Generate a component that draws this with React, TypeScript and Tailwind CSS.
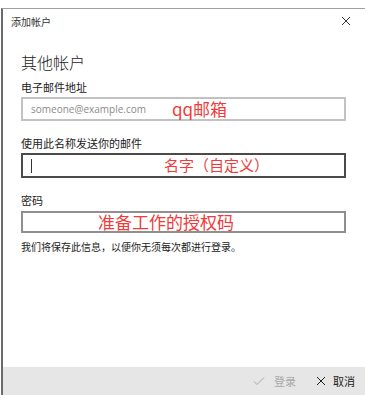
export default function App() {
  const cjk = { fontFamily: '"Noto Sans CJK SC", "Liberation Sans", sans-serif' };
  return (
    <div className="w-[374px] h-[395px] bg-white pt-[8px] pl-[1px]" style={cjk}>
      <div className="w-[364px] h-[387px] border-t border-t-[#a0a0a0] border-l-2 border-l-[#6b6b6b] flex flex-col">
        <div className="h-[24px] flex items-center justify-between pl-[8px] pr-[14px]">
          <span className="text-[10px] text-[#333]">添加帐户</span>
          <svg width="10" height="10" viewBox="0 0 10 10" className="text-[#333]">
            <path d="M1 1 L9 9 M9 1 L1 9" stroke="currentColor" strokeWidth="1" />
          </svg>
        </div>
        <div className="flex-1 pl-[18px] pr-[18px]">
          <h1 className="mt-[19px] text-[16px] leading-[20px] font-light text-[#222]">其他帐户</h1>

          <p className="mt-[8px] text-[11px] leading-[15px] text-[#222]">电子邮件地址</p>
          <div className="mt-[2px] h-[24px] w-[325px] border-2 border-[#c2c2c2] flex items-center pl-[8px]">
            <span
              className="text-[10px] text-[#8a8a8a] w-[141px]"
              style={{ fontFamily: '"Open Sans", "Liberation Sans", sans-serif' }}
            >
              someone@example.com
            </span>
            <span className="text-[17px] leading-[20px] text-[#f23a3a]">qq邮箱</span>
          </div>

          <p className="mt-[15px] text-[11px] leading-[15px] text-[#222]">使用此名称发送你的邮件</p>
          <div className="mt-[2px] h-[25px] w-[325px] border-2 border-[#4a4a4a] flex items-center pl-[8px]">
            <span className="w-px h-[14px] bg-[#333]" />
            <span className="ml-[132px] text-[15px] text-[#f23a3a]">名字（自定义）</span>
          </div>

          <p className="mt-[15px] text-[11px] leading-[15px] text-[#222]">密码</p>
          <div className="mt-[3px] h-[22px] w-[325px] border-2 border-[#8f8f8f] flex items-center pl-[75px]">
            <span className="text-[17px] leading-[20px] text-[#f23a3a]">准备工作的授权码</span>
          </div>

          <p className="mt-[7px] text-[10px] leading-[14px] text-[#222]">
            我们将保存此信息，以便你无须每次都进行登录。
          </p>
        </div>
        <div className="h-[28px] bg-[#e6e6e6] flex items-center justify-end pr-[10px] text-[11px]">
          <div className="flex items-center gap-[9px] text-[#a8a8a8]">
            <svg width="12" height="10" viewBox="0 0 12 10">
              <path d="M1 5.5 L4 8.5 L11 1.5" stroke="currentColor" strokeWidth="1" fill="none" />
            </svg>
            <span>登录</span>
          </div>
          <div className="ml-[20px] flex items-center gap-[7px] text-[#222]">
            <svg width="10" height="10" viewBox="0 0 10 10">
              <path d="M1 1 L9 9 M9 1 L1 9" stroke="currentColor" strokeWidth="1" />
            </svg>
            <span>取消</span>
          </div>
        </div>
      </div>
    </div>
  );
}
